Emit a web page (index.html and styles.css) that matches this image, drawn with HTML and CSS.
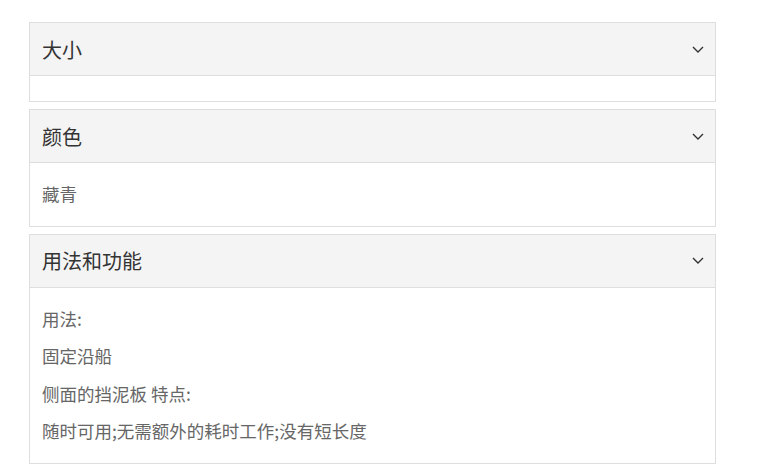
FILE: index.html
```html
<!DOCTYPE html>
<html>
	<head>
		<meta charset="UTF-8">
		<link rel="stylesheet" href="styles.css">
	</head>
	<body>
		<main class="accordion">
			<section class="panel">
				<header class="panel-head">
					<h3>大小</h3>
					<svg class="chevron" width="12" height="7" viewBox="0 0 12 7"><path d="M1 1l5 5 5-5" /></svg>
				</header>
				<div class="panel-body"></div>
			</section>
			<section class="panel">
				<header class="panel-head">
					<h3>颜色</h3>
					<svg class="chevron" width="12" height="7" viewBox="0 0 12 7"><path d="M1 1l5 5 5-5" /></svg>
				</header>
				<div class="panel-body">
					<p>藏青</p>
				</div>
			</section>
			<section class="panel">
				<header class="panel-head">
					<h3>用法和功能</h3>
					<svg class="chevron" width="12" height="7" viewBox="0 0 12 7"><path d="M1 1l5 5 5-5" /></svg>
				</header>
				<div class="panel-body">
					<p>用法:</p>
					<p>固定沿船</p>
					<p>侧面的挡泥板 特点:</p>
					<p>随时可用;无需额外的耗时工作;没有短长度</p>
				</div>
			</section>
		</main>
	</body>
</html>
```

FILE: styles.css
```css
* {
	font-family: "Noto Sans CJK SC", "Liberation Sans", sans-serif;
	box-sizing: border-box;
}
html, body {
	margin: 0;
	padding: 0;
	background: #fff;
}

.accordion {
	display: flex;
	flex-direction: column;
	gap: 7px;
	padding: 22px 0 0 29px;
	width: 716px;
}
.panel {
	border: 1px solid #dedede;
}
.panel-head {
	align-items: center;
	background: #f4f4f4;
	border-bottom: 1px solid #dedede;
	display: flex;
	height: 53px;
	justify-content: space-between;
	padding: 0 11px 0 12px;
}
.panel-head h3 {
	color: #333;
	font-size: 20px;
	font-weight: normal;
	margin: 0;
}
.chevron path {
	fill: none;
	stroke: #333;
	stroke-width: 1.4;
}
.panel-body {
	padding: 12px 12px 13px;
}
.panel-body p {
	color: #666;
	font-size: 17.5px;
	line-height: 37.5px;
	margin: 0;
}
```
